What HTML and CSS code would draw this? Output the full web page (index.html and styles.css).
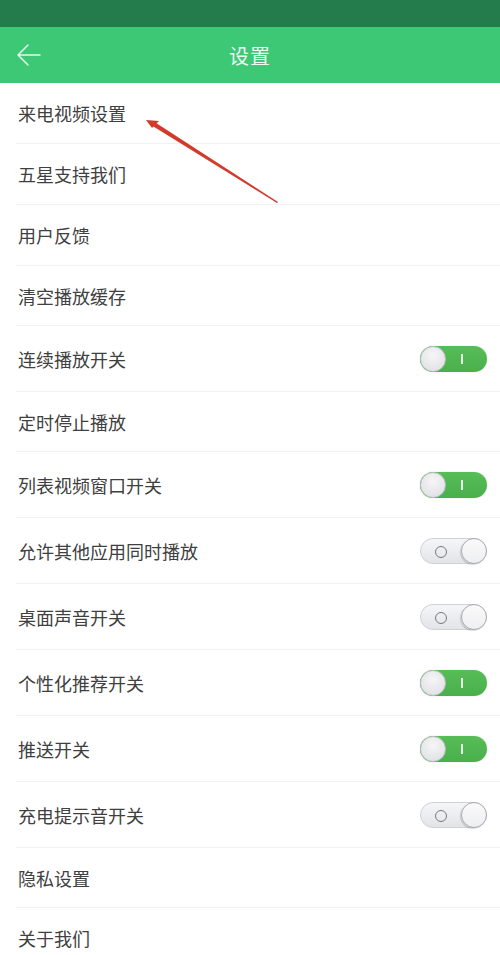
FILE: index.html
```html
<!DOCTYPE html>
<html lang="zh">
<head>
<meta charset="utf-8">
<title>设置</title>
<link rel="stylesheet" href="styles.css">
</head>
<body>
<div class="page">
  <div class="statusbar"></div>
  <header class="topbar">
    <svg class="back" width="26" height="24" viewBox="0 0 26 24" aria-hidden="true">
      <path d="M24 12 H2 M12 2 L2 12 L12 22" fill="none" stroke="#e6f8ec" stroke-width="1.5" stroke-linecap="round" stroke-linejoin="round"/>
    </svg>
    <h1 class="title">设置</h1>
  </header>
  <ul class="list">
    <li class="row"><span class="label">来电视频设置</span></li>
    <li class="row"><span class="label">五星支持我们</span></li>
    <li class="row"><span class="label">用户反馈</span></li>
    <li class="row short"><span class="label">清空播放缓存</span></li>
    <li class="row tall"><span class="label">连续播放开关</span><span class="switch on"><span class="knob"></span></span></li>
    <li class="row short"><span class="label">定时停止播放</span></li>
    <li class="row tall"><span class="label">列表视频窗口开关</span><span class="switch on"><span class="knob"></span></span></li>
    <li class="row tall"><span class="label">允许其他应用同时播放</span><span class="switch off"><span class="knob"></span></span></li>
    <li class="row tall"><span class="label">桌面声音开关</span><span class="switch off"><span class="knob"></span></span></li>
    <li class="row tall"><span class="label">个性化推荐开关</span><span class="switch on"><span class="knob"></span></span></li>
    <li class="row tall"><span class="label">推送开关</span><span class="switch on"><span class="knob"></span></span></li>
    <li class="row tall"><span class="label">充电提示音开关</span><span class="switch off"><span class="knob"></span></span></li>
    <li class="row short"><span class="label">隐私设置</span></li>
    <li class="row"><span class="label">关于我们</span></li>
  </ul>
  <svg class="pointer" width="500" height="260" viewBox="0 0 500 260" aria-hidden="true">
    <polygon points="153,121 278,202 277,203 151,125" fill="#d23a2c"/>
    <polygon points="146,120 159,121 152,128" fill="#d23a2c"/>
  </svg>
</div>
</body>
</html>
```

FILE: styles.css
```css
* { box-sizing: border-box; }
html, body { margin: 0; padding: 0; background: #ffffff; }
body {
  font-family: "Noto Sans CJK SC", "Noto Sans", sans-serif;
  color: #3a3a3a;
}
.page {
  position: relative;
  width: 500px;
  height: 955px;
  overflow: hidden;
  background: #fff;
}
.statusbar {
  height: 27px;
  background: #247c4c;
}
.topbar {
  height: 56px;
  background: #3cc875;
  display: flex;
  align-items: center;
  justify-content: center;
  position: relative;
}
.back {
  position: absolute;
  left: 16px;
  top: 16px;
}
.title {
  margin: 0;
  font-size: 20px;
  font-weight: 400;
  color: #eefaf2;
  letter-spacing: 1px;
}
.list {
  list-style: none;
  margin: 0;
  padding: 0 0 0 16px;
}
.row {
  height: 61px;
  display: flex;
  align-items: center;
  justify-content: space-between;
  border-bottom: 1px solid #f1f1f1;
  padding: 0 13px 0 2px;
}
.row.short { height: 60px; }
.row.tall { height: 66px; }
.label {
  font-size: 18px;
  line-height: 1;
  color: #404040;
}
.switch {
  position: relative;
  width: 67px;
  height: 26px;
  border-radius: 13px;
  flex: none;
}
.switch.on {
  background: linear-gradient(#56bd57, #4ab04b);
  box-shadow: 0 0 1px rgba(60,140,60,0.5);
}
.switch.on::after {
  content: "";
  position: absolute;
  left: 41px;
  top: 8px;
  width: 2px;
  height: 10px;
  background: #e9f7e9;
}
.switch.off {
  background: linear-gradient(#f5f6f8, #e3e4e8);
  border: 1px solid #cfd1d5;
}
.switch.off::after {
  content: "";
  position: absolute;
  left: 14px;
  top: 7px;
  width: 10px;
  height: 10px;
  border: 1.5px solid #7a7a7a;
  border-radius: 50%;
}
.knob {
  position: absolute;
  top: 0;
  width: 26px;
  height: 26px;
  border-radius: 50%;
  background: radial-gradient(circle at 50% 35%, #f6f6f8, #dcdde1);
  border: 1px solid #bfc0c4;
}
.switch.on .knob { left: 0; }
.switch.off .knob {
  right: -1px;
  top: -1px;
  background: linear-gradient(#fafafa, #eeeff1);
  border: 1px solid #a9abb0;
  box-shadow: -1px 1px 1px rgba(0,0,0,0.15);
}
.pointer {
  position: absolute;
  left: 0;
  top: 0;
  pointer-events: none;
}
```
